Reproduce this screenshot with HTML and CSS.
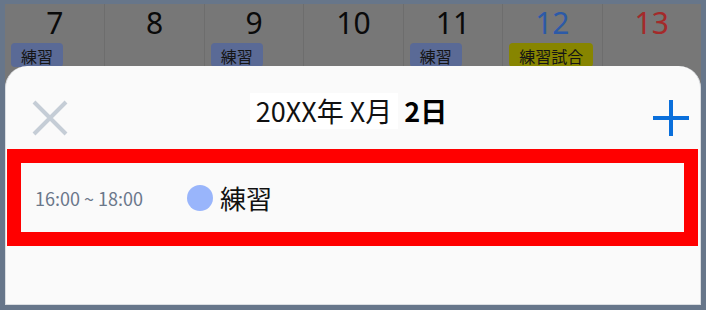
FILE: index.html
```html
<!DOCTYPE html>
<html lang="ja">
<head>
<meta charset="utf-8">
<title>Schedule</title>
<link rel="stylesheet" href="styles.css">
</head>
<body>
<div class="frame">
  <div class="calendar">
    <div class="day"><span class="num">7</span><span class="badge badge-practice">練習</span></div>
    <div class="day"><span class="num">8</span></div>
    <div class="day"><span class="num">9</span><span class="badge badge-practice">練習</span></div>
    <div class="day"><span class="num">10</span></div>
    <div class="day"><span class="num">11</span><span class="badge badge-practice">練習</span></div>
    <div class="day"><span class="num sat">12</span><span class="badge badge-match">練習試合</span></div>
    <div class="day"><span class="num sun">13</span></div>
  </div>
  <section class="sheet">
    <header class="sheet-head">
      <button class="icon-btn close" aria-label="閉じる">
        <svg width="36" height="36" viewBox="0 0 36 36"><path d="M2 2L34 34M34 2L2 34" stroke="#c5cdd6" stroke-width="4" fill="none"/></svg>
      </button>
      <h1 class="title"><span class="title-ym">20XX年 X月</span> <span class="title-d">2日</span></h1>
      <button class="icon-btn add" aria-label="追加">
        <svg width="36" height="36" viewBox="0 0 36 36"><path d="M18 0V36M0 18H36" stroke="#0a6fdb" stroke-width="4" fill="none"/></svg>
      </button>
    </header>
    <ul class="events">
      <li class="event selected">
        <span class="time">16:00 ~ 18:00</span>
        <span class="dot"></span>
        <span class="event-name">練習</span>
      </li>
    </ul>
  </section>
</div>
</body>
</html>
```

FILE: styles.css
```css
* { box-sizing: border-box; }
html, body { margin: 0; padding: 0; }
body {
  font-family: "Noto Sans", "Noto Sans CJK JP", sans-serif;
  background: #fff;
}
.frame {
  position: relative;
  width: 706px;
  height: 310px;
  border: 5px solid #67768a;
  border-top-width: 4px;
  background: #777777;
  overflow: hidden;
}
.calendar {
  display: grid;
  grid-template-columns: repeat(7, 1fr);
  height: 100%;
}
.day {
  display: flex;
  flex-direction: column;
  align-items: flex-start;
  border-left: 1px solid #6d6d6d;
  padding: 0 6px;
}
.day:first-child { border-left: none; }
.num {
  align-self: center;
  font-size: 30px;
  line-height: 38px;
  color: #0a0a0a;
}
.num.sat { color: #2c5aa8; }
.num.sun { color: #a42a2a; }
.badge {
  margin-top: 1px;
  padding: 0 10px;
  height: 24px;
  line-height: 27px;
  font-size: 16px;
  font-family: "Noto Sans CJK JP", sans-serif;
  color: #151515;
  border-radius: 4px;
}
.badge-practice { background: #5a6a96; }
.badge-match { background: #878500; }

.sheet {
  position: absolute;
  left: 0;
  right: 0;
  top: 62px;
  bottom: 0;
  background: #fafafa;
  border: 1px solid #dadde1;
  border-top: none;
  border-radius: 22px 22px 0 0;
}
.sheet-head {
  display: grid;
  grid-template-columns: 1fr auto 1fr;
  align-items: start;
  padding: 27px 11px 0 26px;
  height: 97px;
}
.icon-btn {
  border: none;
  background: none;
  padding: 0;
  margin-top: 7px;
  width: 36px;
  height: 36px;
}
.icon-btn svg { display: block; }
.add { justify-self: end; }
.title {
  margin: 0 24px 0 0;
  font-family: "Noto Sans CJK JP", sans-serif;
  font-size: 27px;
  line-height: 36px;
  font-weight: 400;
  color: #111;
  white-space: nowrap;
}
.title-ym {
  display: inline-block;
  background: #ffffff;
  padding: 0 6px;
}
.title-d { font-weight: 700; color: #000; }

.events {
  list-style: none;
  margin: 0;
  padding: 0 16px 0 15px;
}
.event {
  display: flex;
  align-items: center;
  height: 69px;
  padding-left: 14px;
}
.event.selected { outline: 14px solid #ff0000; }
.time {
  width: 152px;
  font-family: "Noto Sans CJK JP", sans-serif;
  font-size: 18px;
  color: #6b778a;
}
.dot {
  width: 26px;
  height: 26px;
  border-radius: 50%;
  background: #99b5fb;
  margin-right: 7px;
}
.event-name {
  font-family: "Noto Sans CJK JP", sans-serif;
  font-size: 26px;
  color: #111;
}
```
